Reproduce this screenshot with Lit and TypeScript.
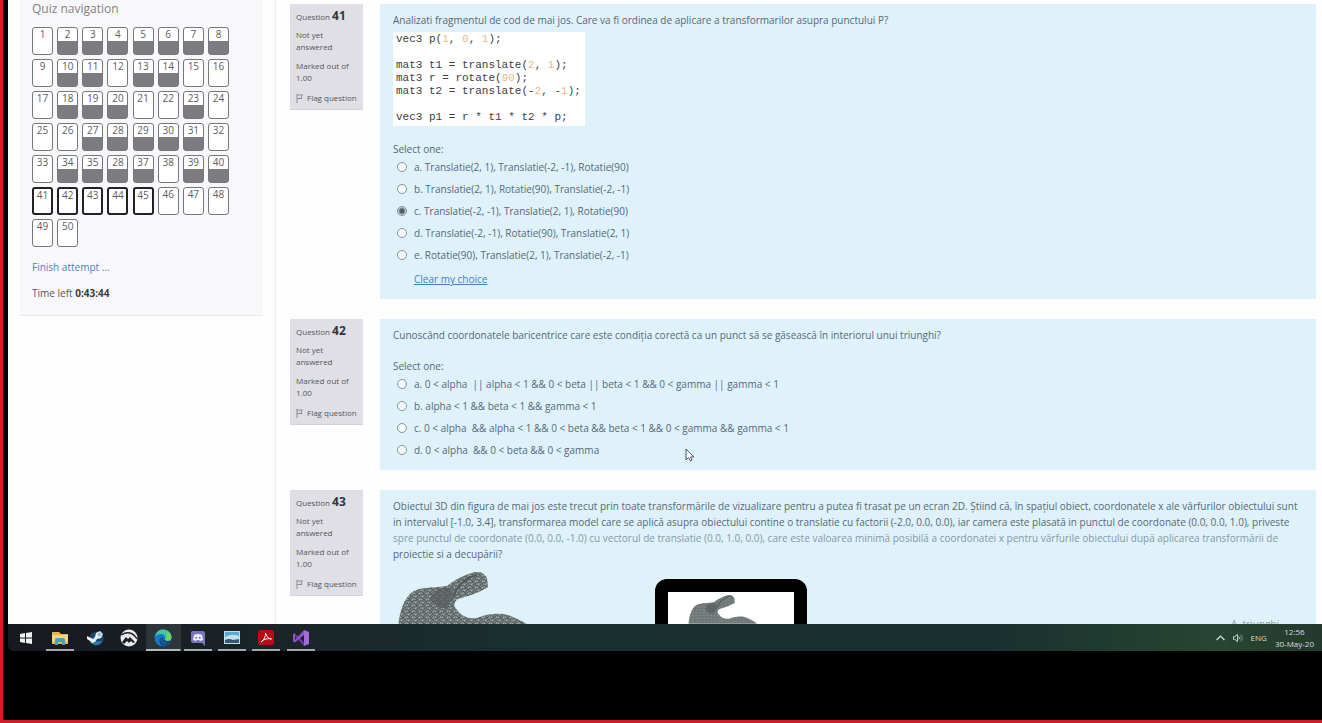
import { LitElement, html, css, svg, nothing } from "lit";
import { customElement, property, state } from "lit/decorators.js";
import { classMap } from "lit/directives/class-map.js";

const ANSWERED = new Set([2, 3, 4, 5, 6, 7, 8, 10, 11, 13, 14, 18, 19, 20, 23, 27, 28, 29, 30, 31, 34, 35, 36, 37, 39, 40]);
const CURRENT = new Set([41, 42, 43, 44, 45]);
const LABELS: Record<number, string> = { 36: "28" };

const bunny = (id: string) => svg`
  <defs>
    <pattern id=${id} width="7" height="6" patternUnits="userSpaceOnUse">
      <rect width="7" height="6" fill="#7f8686"></rect>
      <path d="M0 1L2 3L4 0L7 2M0 5L3 4L5 6L7 4M2 3L3 4L5 2" stroke="#4d5555" stroke-width=".8" fill="none"></path>
      <path d="M1 0L2 1M5 4L6 3M0 3L1 4" stroke="#a9b1b0" stroke-width=".8"></path>
    </pattern>
  </defs>
  <path fill="url(#${id})" d="M5 56C6 42 10 28 18 21C26 14 43 16 54 14C62 7 74 2 82 0C88 -1 92 2 94 6L95 15C88 20 76 24 65 27C61 30 60 34 64 38C69 45 76 47 84 46C96 41 112 40 122 46C130 49 135 52 138 56Z"></path>
  <path fill="#555c5d" opacity=".7" d="M38 26C39 19 47 15 58 16L60 26L54 36C47 37 40 34 38 26Z"></path>
  <path fill="none" stroke="#50585a" stroke-width="2" d="M61 25C62 16 71 6 84 3"></path>`;

@customElement("quiz-navigation")
class QuizNavigation extends LitElement {
  static styles = css`
    :host { display: block; }
    .card { padding: 2px 34px 14px 12px; background: #f8f8fb; border-bottom: 1px solid #e9e9ee; }
    .title { margin: 0; font-size: 12px; line-height: 14px; font-weight: 400; color: #838388; }
    .grid { display: grid; grid-template-columns: repeat(8, 21px); justify-content: space-between; row-gap: 4px; margin-top: 11px; }
    .cell { box-sizing: border-box; height: 28px; border: 1px solid #76767b; border-radius: 3px; background: #fff; color: #5b5b60; font-size: 10px; line-height: 13px; text-align: center; text-decoration: none; }
    .answered { background: linear-gradient(#fff 13px, #7b7c80 13px); }
    .current { border: 2px solid #222226; line-height: 12px; }
    .finish { display: block; margin-top: 12px; font-size: 10px; line-height: 16px; color: #4c83bb; text-decoration: none; }
    .time { margin: 10px 0 0; font-size: 10px; line-height: 16px; color: #55555a; }
    .time strong { color: #3c3c40; }
  `;
  render() {
    const cells = Array.from({ length: 50 }, (_, i) => i + 1);
    return html`<section class="card">
      <h2 class="title">Quiz navigation</h2>
      <nav class="grid">
        ${cells.map((n) => html`<a href="#q${n}" class=${classMap({ cell: true, answered: ANSWERED.has(n), current: CURRENT.has(n) })}>${LABELS[n] ?? n}</a>`)}
      </nav>
      <a class="finish" href="#finish">Finish attempt ...</a>
      <p class="time">Time left <strong>0:43:44</strong></p>
    </section>`;
  }
}

@customElement("quiz-question")
class QuizQuestion extends LitElement {
  @property({ type: Number }) number = 0;
  @property({ attribute: false }) options: string[] = [];
  @property({ type: Number }) chosen = -1;
  static styles = css`
    :host { display: flex; align-items: flex-start; gap: 17px; }
    .info { box-sizing: border-box; flex: 0 0 73px; min-width: 0; padding: 5px 6px; background: #dfdfe5; border-bottom: 1px solid #d3d3d9; color: #55565c; font-size: 8px; line-height: 12px; white-space: nowrap; }
    .no { margin: 0; font-size: 8px; line-height: 14px; font-weight: 400; }
    .no b { font-size: 12px; color: #35353a; }
    .state { margin: 5px 0 0; }
    .mark { margin: 7px 0 8px; }
    .flag { display: flex; align-items: center; gap: 4px; margin: 0; padding: 0; border: 0; background: none; color: inherit; font: inherit; }
    .body { flex: 1; min-width: 0; padding: 8px 13px 12px; background: #dff2f9; color: #55697a; font-size: 10px; line-height: 16px; }
    .group { margin: 15px 0 0; padding: 0; border: 0; }
    .legend { padding: 0; }
    .list { display: grid; gap: 6px; margin-top: 2px; }
    .option { display: flex; align-items: center; white-space: pre; }
    .radio { appearance: none; box-sizing: border-box; width: 10px; height: 10px; margin: 0 7px 0 4px; border: 1px solid #87929a; border-radius: 50%; background: #f8fcfe; }
    .radio:checked { background: radial-gradient(circle, #505a62 0 2px, #d7e2e8 4px); }
    .clear { display: block; width: fit-content; margin: 8px 0 0 21px; color: #447fb9; }
  `;
  render() {
    const q = "q" + this.number;
    return html`
      <aside class="info">
        <h3 class="no">Question <b>${this.number}</b></h3>
        <p class="state">Not yet<br />answered</p>
        <p class="mark">Marked out of<br />1.00</p>
        <button class="flag" type="button">
          <svg width="7" height="9" viewBox="0 0 7 9"><path d="M1 0V9M1 1H6.500L5 3L6 4.500H1" fill="none" stroke="#8b8c94"></path></svg>Flag question
        </button>
      </aside>
      <div class="body">
        <slot></slot>
        ${this.options.length
          ? html`<fieldset class="group">
              <legend class="legend">Select one:</legend>
              <div class="list">
                ${this.options.map((o, i) => html`<label class="option" for=${q + i}><input class="radio" type="radio" id=${q + i} name=${q} .checked=${i === this.chosen} />${"abcde"[i]}. ${o}</label>`)}
              </div>
            </fieldset>`
          : nothing}
        ${this.chosen >= 0 ? html`<a class="clear" href="#clear">Clear my choice</a>` : nothing}
      </div>`;
  }
}

@customElement("task-bar")
class TaskBar extends LitElement {
  static styles = css`
    :host { display: flex; align-items: stretch; height: 27px; border-bottom-left-radius: 6px; background: linear-gradient(90deg, #17191f 0, #1a2427 20%, #19302f 40%, #1a302f 75%, #264632 92%, #24392f 100%); color: #d9dedc; font-size: 8px; line-height: 12px; }
    .app { display: flex; align-items: center; justify-content: center; box-sizing: border-box; padding: 0; border: 0; background: none; }
    .start { width: 35px; }
    .apps { display: grid; grid-template-columns: repeat(8, 1fr); width: 275px; }
    .open { background: linear-gradient(#a5a9ab, #a5a9ab) center bottom / 28px 2px no-repeat; }
    .active { background: linear-gradient(#b4b8ba, #b4b8ba) center bottom / 100% 2px no-repeat, #2c3639; }
    .tray { display: flex; align-items: center; gap: 8px; margin-left: auto; padding-right: 8px; }
    .clock { text-align: center; }
  `;
  icons = [
    ["File Explorer", "open", svg`<path d="M1 3H8L10 5H17V15H1Z" fill="#dfb75a"></path><path d="M1 6H17V13H1Z" fill="#f4d77d"></path><path d="M4 16V11Q4 9 6 9H12Q14 9 14 11V16H11V13H7V16Z" fill="#4f9fb5"></path>`],
    ["Steam", "", svg`<circle cx="10.500" cy="9.500" r="7" fill="#17466f"></circle><path d="M4 13Q10 20 17 12Z" fill="#257bad"></path><path d="M1 7L7 10L9 8L10 4L14 2L17 5L15 9L11 10L9 13L6 14L4 12L1 10Z" fill="#e9f1f6"></path><circle cx="13.500" cy="5.500" r="2" fill="#9db7c8"></circle>`],
    ["Gallery", "", svg`<circle cx="9" cy="9" r="8.500" fill="#ececec"></circle><path d="M1 6Q11 0 17 10" fill="none" stroke="#202124" stroke-width="1.300"></path><path d="M2 13L6 8L8 10L10 8L15 13L13 14L11 12L9 14L7 12L4 15Z" fill="#202124"></path>`],
    ["Edge", "active", svg`<circle cx="9" cy="9" r="8.500" fill="#1878c6"></circle><path d="M1 8C2 2 6 .5 9 .5C14 .5 17.500 4 17.500 8C17.500 12 13 13 11 11C13 8 10 5 7 5C4 5 2 6 1 8Z" fill="#43c5a1"></path><path d="M12 2Q17 4 17.500 8Q17 12 12 11L11 10Q14 7 12 2Z" fill="#71d35c"></path><path d="M8 8C6 11 8 15 14 14L17 12C15 16 12 17.500 9 17.500C5 16 4 10 8 8Z" fill="#124d91"></path><path d="M9 7.500C8 11 11 13 17.500 12L16 13.500C9 15 6 10 9 7.500Z" fill="#2c3639"></path>`],
    ["Discord", "open", svg`<path d="M4 2H14Q16 2 16 4V17L13 14H4Q2 14 2 12V4Q2 2 4 2Z" fill="#7a73bd"></path><path d="M5 6Q9 4 13 6L14 11L11 12L10 11H8L7 12L4 11Z" fill="#f0effc"></path><circle cx="7.200" cy="8.700" r="1" fill="#7a73bd"></circle><circle cx="10.800" cy="8.700" r="1" fill="#7a73bd"></circle>`],
    ["Photos", "open", svg`<path d="M1 2H17V15H1Z" fill="#bfe0ec"></path><path d="M2 3H16V7Q9 4 2 8Z" fill="#5aa6cc"></path><path d="M2 11Q6 9 10 11L16 10V14H2Z" fill="#33586c"></path>`],
    ["Acrobat", "open", svg`<rect x="1" y="1" width="16" height="15" rx="2" fill="#b30f16"></rect><path d="M4 13C7 11 9 7 8.500 4C10 8 12 10 14.500 10C11 9 7 10 4 13Z" fill="none" stroke="#fff" stroke-width="1"></path>`],
    ["Visual Studio", "open", svg`<path d="M12 1V17L1.500 6L1 5L3 4.500L12 13Z" fill="#6b35a5"></path><path d="M12 1V6L3 13.500L1 12.500V5L3 4.500V11Z" fill="#8c50c8"></path><path d="M12 1L17 3V15L12 17Z" fill="#a26bdc"></path>`],
  ] as const;
  render() {
    return html`
      <button class="app start" aria-label="Start"><svg width="12" height="12" viewBox="0 0 12 12"><path d="M0 2L5 1V5.500H0ZM6 1L12 0V5.500H6ZM0 6.500H5V11L0 10ZM6 6.500H12V12L6 11Z" fill="#f0f0f0"></path></svg></button>
      <div class="apps">${this.icons.map(([name, cls, art]) => html`<button class="app ${cls}" aria-label=${name}><svg width="18" height="18" viewBox="0 0 18 18">${art}</svg></button>`)}</div>
      <div class="tray">
        <svg width="9" height="6" viewBox="0 0 9 6"><path d="M.5 5L4.500 1L8.500 5" fill="none" stroke="#d9dedc" stroke-width="1.200"></path></svg>
        <svg width="10" height="10" viewBox="0 0 11 10"><path d="M.5 3.500H2L5 1V9L2 6.500H.5Z" fill="none" stroke="#d9dedc"></path><path d="M6.500 3.500Q7.500 5 6.500 6.500" fill="none" stroke="#d9dedc"></path><path d="M8 2Q10 5 8 8M9.500 1Q12 5 9.500 9" fill="none" stroke="#6b7a72"></path></svg>
        <span>ENG</span>
        <time class="clock">12:56<br />30-May-20</time>
      </div>`;
  }
}

@customElement("app-root")
class AppRoot extends LitElement {
  @state() private first = [
    "Translatie(2, 1), Translatie(-2, -1), Rotatie(90)",
    "Translatie(2, 1), Rotatie(90), Translatie(-2, -1)",
    "Translatie(-2, -1), Translatie(2, 1), Rotatie(90)",
    "Translatie(-2, -1), Rotatie(90), Translatie(2, 1)",
    "Rotatie(90), Translatie(2, 1), Translatie(-2, -1)",
  ];
  @state() private second = [
    "0 < alpha  || alpha < 1 && 0 < beta || beta < 1 && 0 < gamma || gamma < 1",
    "alpha < 1 && beta < 1 && gamma < 1",
    "0 < alpha  && alpha < 1 && 0 < beta && beta < 1 && 0 < gamma && gamma < 1",
    "0 < alpha  && 0 < beta && 0 < gamma",
  ];
  private code = [
    "vec3 p(#1, #0, #1);",
    " ",
    "mat3 t1 = translate(#2, #1);",
    "mat3 r = rotate(#90);",
    "mat3 t2 = translate(-#2, -#1);",
    " ",
    "vec3 p1 = r * t1 * t2 * p;",
  ];
  static styles = css`
    :host { display: block; font-family: "Open Sans", "Noto Sans", sans-serif; }
    .frame { display: flex; flex-direction: column; box-sizing: border-box; height: 100vh; padding: 0 0 69px 5px; border: solid #d01c27; border-width: 0 0 3px 3px; background: #000; overflow: hidden; }
    .page { position: relative; display: flex; flex: 1; min-height: 0; overflow: hidden; background: #fefeff; }
    .side { box-sizing: border-box; flex: 0 0 268px; padding: 0 12px; border-right: 1px solid #ececf0; }
    .main { display: flex; flex-direction: column; gap: 20px; flex: 1; min-width: 0; padding: 4px 6px 0 14px; }
    .text { margin: 0; }
    .nowrap { white-space: nowrap; }
    .faded { color: #8499a8; }
    .code { width: fit-content; margin: 4px 0 0; padding: 1px 4px 2px 3px; background: #fff; color: #3c3c44; font: 11px/13px "Liberation Mono", monospace; }
    .line { display: flex; font: inherit; white-space: pre; }
    .num { color: #e8b98a; }
    .figures { display: flex; align-items: flex-start; gap: 122px; margin-top: 10px; }
    .screen { box-sizing: border-box; width: 152px; height: 100px; margin-top: 7px; padding: 3px 0 0 18px; border: 13px solid #000; border-radius: 12px; background: #fff; }
    .caption { margin: 46px 24px 0 auto; font-size: 10px; line-height: 12px; color: #90a0a8; }
    .pointer { position: absolute; left: 677px; top: 448px; }
  `;
  render() {
    return html`<div class="frame">
      <div class="page">
        <div class="side"><quiz-navigation></quiz-navigation></div>
        <main class="main">
          <quiz-question .number=${41} .options=${this.first} .chosen=${2}>
            <p class="text">Analizati fragmentul de cod de mai jos. Care va fi ordinea de aplicare a transformarilor asupra punctului P?</p>
            <div class="code">${this.code.map((l) => html`<code class="line">${l.split(/(#\d+)/).filter(Boolean).map((t) => (t[0] === "#" ? html`<span class="num">${t.slice(1)}</span>` : html`<span>${t}</span>`))}</code>`)}</div>
          </quiz-question>
          <quiz-question .number=${42} .options=${this.second}>
            <p class="text">Cunoscând coordonatele baricentrice care este condiția corectă ca un punct să se găsească în interiorul unui triunghi?</p>
          </quiz-question>
          <quiz-question .number=${43}>
            <p class="text nowrap">
              Obiectul 3D din figura de mai jos este trecut prin toate transformările de vizualizare pentru a putea fi trasat pe un ecran 2D. Știind că, în spațiul obiect, coordonatele x ale vârfurilor obiectului sunt<br />
              in intervalul [-1.0, 3.4], transformarea model care se aplică asupra obiectului contine o translatie cu factorii (-2.0, 0.0, 0.0), iar camera este plasată in punctul de coordonate (0.0, 0.0, 1.0), priveste<br />
              <span class="faded">spre punctul de coordonate (0.0, 0.0, -1.0) cu vectorul de translatie (0.0, 1.0, 0.0), care este valoarea minimă posibilă a coordonatei x pentru vârfurile obiectului după aplicarea transformării de</span><br />
              proiectie si a decupării?
            </p>
            <div class="figures">
              <svg width="140" height="56" viewBox="0 0 140 56">${bunny("mesh")}</svg>
              <div class="screen"><svg width="72" height="32" viewBox="0 0 140 62">${bunny("mesh-small")}</svg></div>
              <p class="caption">A. triunghi</p>
            </div>
          </quiz-question>
        </main>
        <svg class="pointer" width="10" height="14" viewBox="0 0 10 14"><path d="M1 1V12L3.500 9.500L5.500 13L7 12L5.500 9H9Z" fill="#f5fafc" stroke="#4b5560"></path></svg>
      </div>
      <task-bar></task-bar>
    </div>`;
  }
}
